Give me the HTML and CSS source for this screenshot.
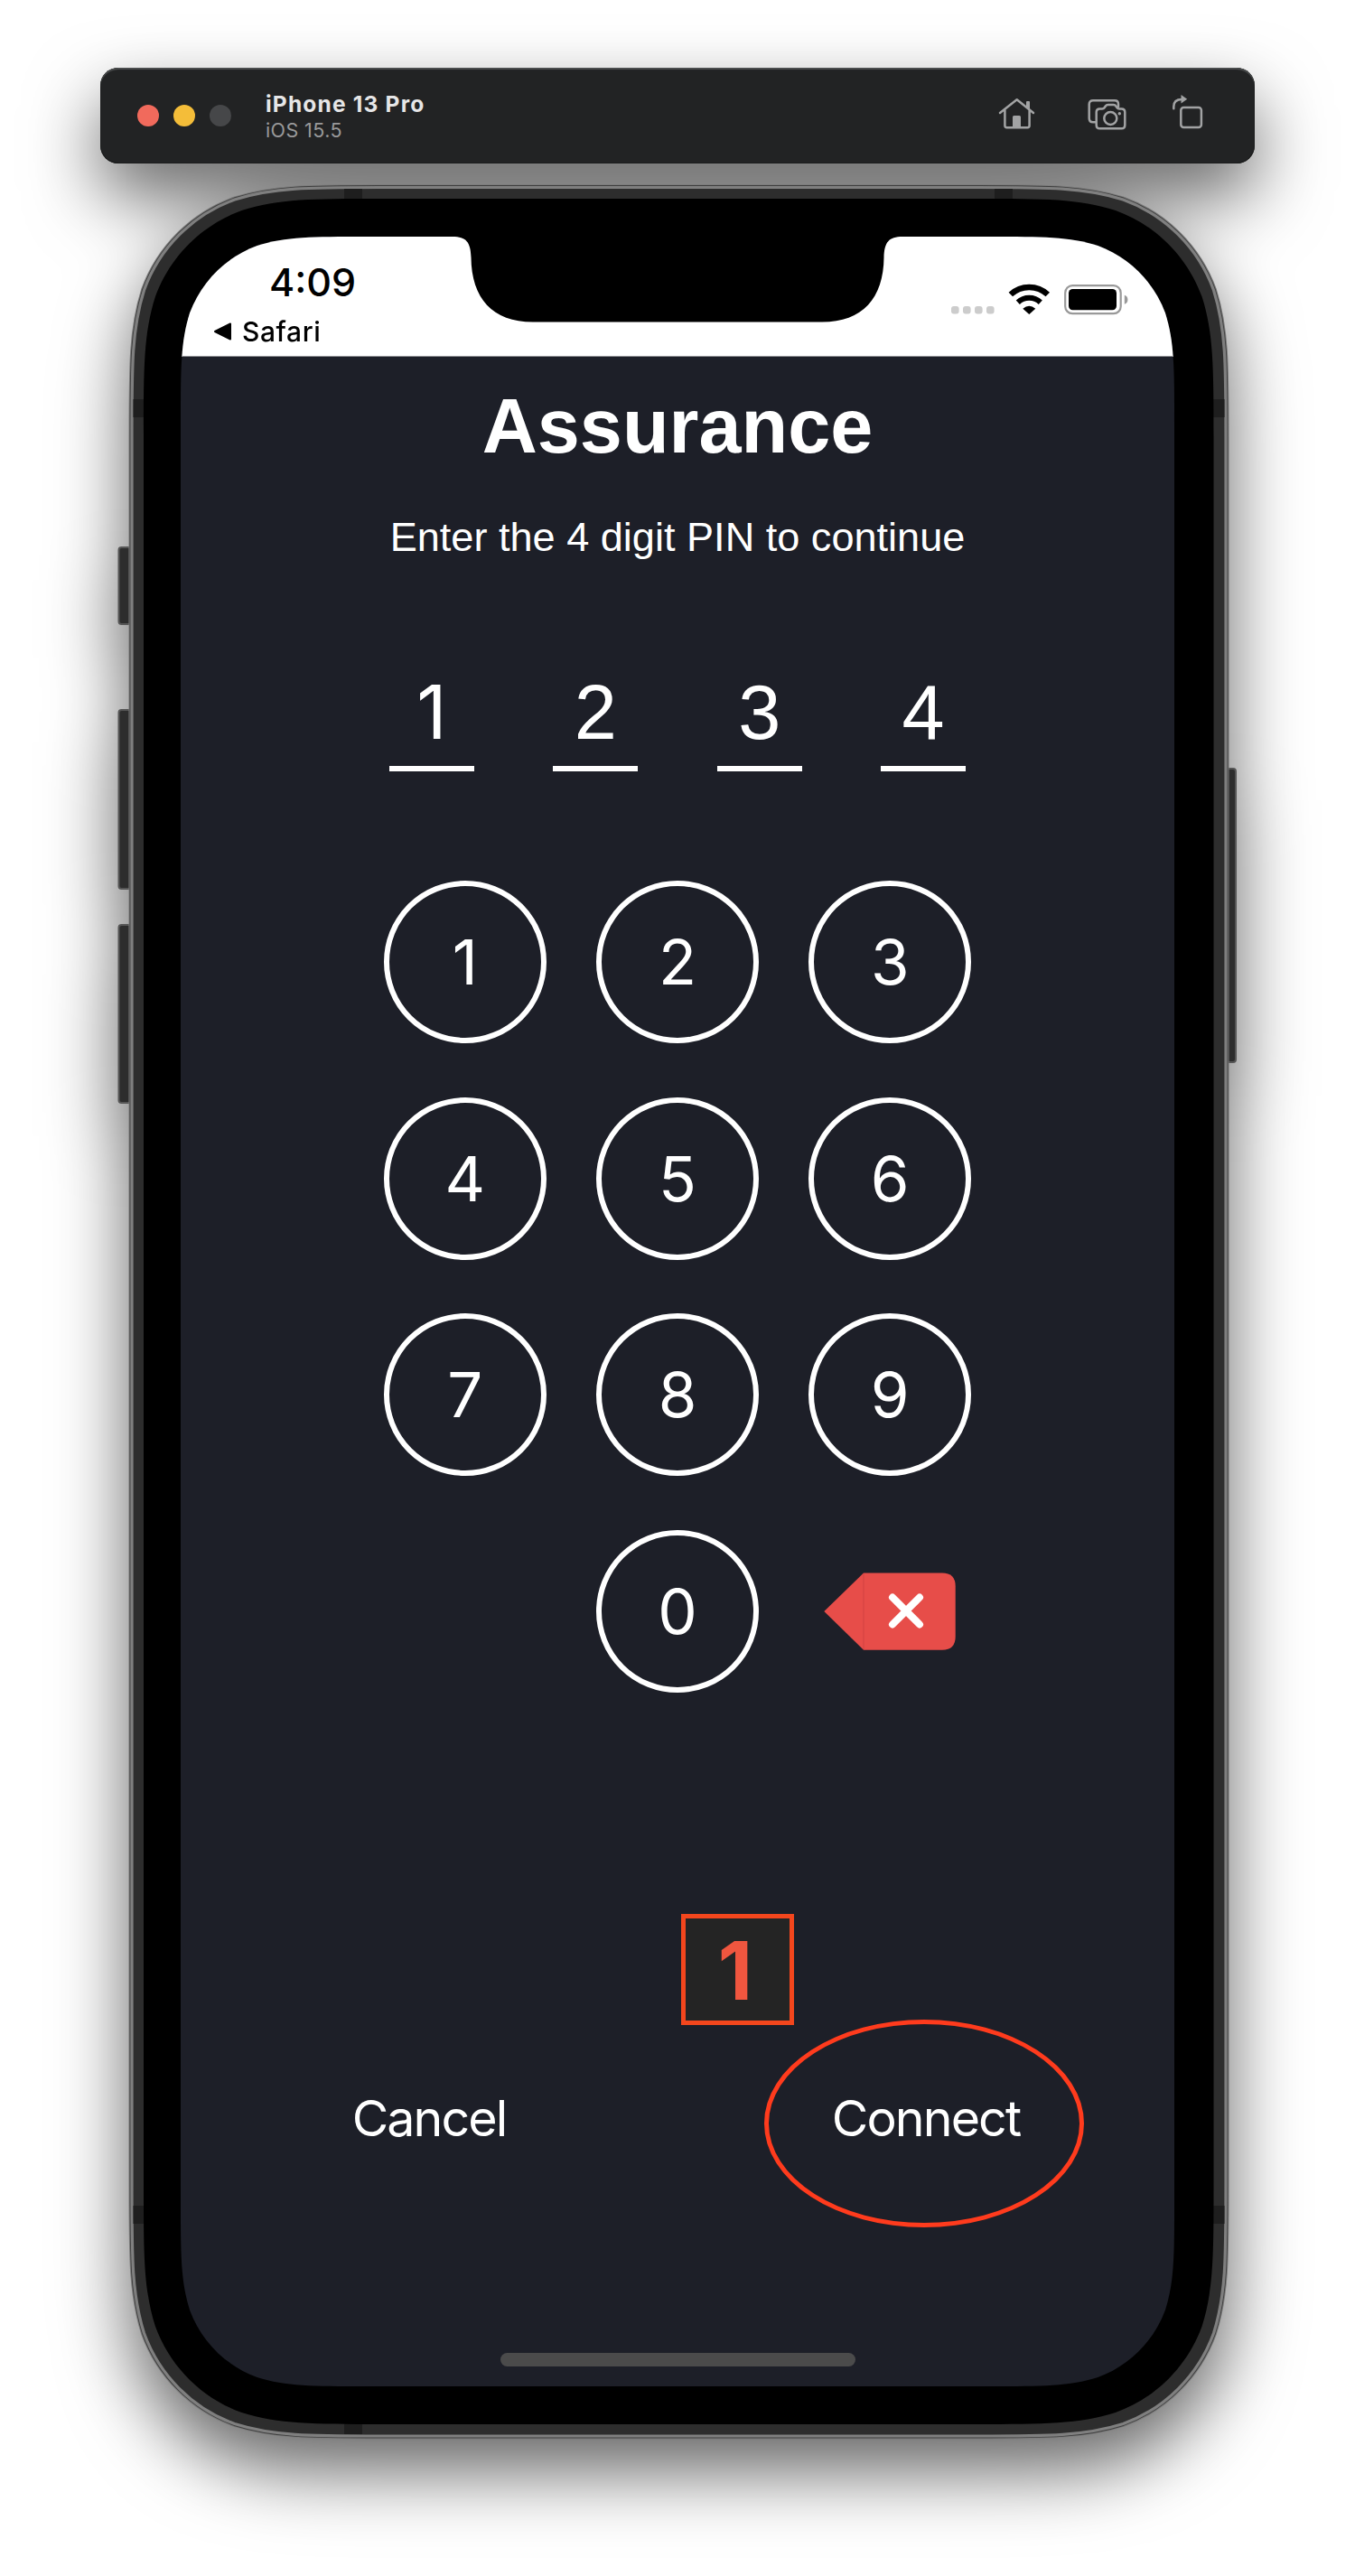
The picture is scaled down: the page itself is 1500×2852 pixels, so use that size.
FILE: index.html
```html
<!DOCTYPE html>
<html lang="en">
<head>
<meta charset="utf-8">
<title>iPhone 13 Pro – iOS 15.5</title>
<link rel="stylesheet" href="styles.css">
</head>
<body>
<main class="simulator">
  <header class="titlebar">
    <div class="lights"><i class="light red"></i><i class="light yellow"></i><i class="light off"></i></div>
    <div class="window-title">
      <div class="device-name">iPhone 13 Pro</div>
      <div class="os-name">iOS 15.5</div>
    </div>
    <nav class="tools">
      <svg class="tool home" viewBox="0 0 41 42" width="41" height="42">
        <path d="M2 21 20.7 6.3 39 21M7.4 18v17q0 2.2 2.2 2.2h22.8q2.2 0 2.2-2.2V18"/>
        <path class="solid" d="M16 25.5q0-1.5 1.500-1.500h6q1.500 0 1.500 1.500V38h-9zM31 9q0-1 1-1h2q1 0 1 1v9l-4-3.500z"/>
      </svg>
      <svg class="tool camera" viewBox="0 0 45 42" width="45" height="42">
        <path d="M9.500 31.200H7q-4.300 0-4.300-4.300V11.500q0-4.200 4.300-4.200h24q4 0 4 4v3"/>
        <path d="M14.500 16.500h2.500q1.800 0 2.800-1.500l1-1.500q1-1.400 2.800-1.400h6q1.800 0 2.800 1.400l1 1.500q1 1.500 2.800 1.500h2.300q3.800 0 3.800 3.800v14.200q0 3.800-3.800 3.800h-24q-3.800 0-3.800-3.800V20.300q0-3.800 3.800-3.800z"/>
        <circle cx="26.300" cy="27" r="7"/><circle class="solid" cx="36.300" cy="21.700" r="1.700"/>
      </svg>
      <svg class="tool rotate" viewBox="0 0 35 42" width="35" height="42">
        <rect x="10.300" y="15" width="22.600" height="22" rx="3"/>
        <path d="M2.300 16.300V14q0-8 9-8"/>
        <path class="solid" d="M10.500 1 17.200 5.700 10.500 10.500z"/>
      </svg>
    </nav>
  </header>

  <section class="device">
    <svg class="chassis" viewBox="111 190 1278 2530" width="1278" height="2530">
      <defs>
        <path id="frame" d="M421.200 207.500H1081.800c79.300 0 118.900 0 161.500 13.500c46.600 16.900 83.300 53.600 100.200 100.200c13.500 42.600 13.500 82.200 13.500 161.500V2421.800c0 79.300 0 118.900-13.500 161.500c-16.900 46.600-53.600 83.300-100.200 100.200c-42.600 13.500-82.200 13.500-161.500 13.500H421.200c-79.300 0-118.900 0-161.500-13.500c-46.600-16.900-83.300-53.600-100.200-100.200c-13.500-42.600-13.500-82.200-13.500-161.500V482.700c0-79.300 0-118.900 13.500-161.500c16.900-46.600 53.600-83.300 100.200-100.200c42.600-13.500 82.200-13.500 161.500-13.500z"/>
      </defs>
      <g class="side-buttons">
        <rect x="131.500" y="606" width="20" height="85" rx="3"/>
        <rect x="131.500" y="786" width="20" height="198" rx="3"/>
        <rect x="131.500" y="1024" width="20" height="197" rx="3"/>
        <rect x="1350" y="851" width="18" height="325" rx="3"/>
      </g>
      <use href="#frame" class="edge-outer"/>
      <use href="#frame" class="edge-line"/>
      <use href="#frame" class="edge-light"/>
      <g class="bands">
        <path d="M381 209h20v12h-20zM1101 209h20v12h-20zM381 2683h20v12h-20zM147.500 442h12v20h-12zM147.500 2442h12v20h-12zM1343 442h12.500v20h-12.500zM1343 2442h12.500v20h-12.500z"/>
      </g>
      <path class="bezel" d="M421.900 220H1080.600c75.700 0 113.500 0 154.300 12.900c44.500 16.200 79.500 51.200 95.700 95.700c12.900 40.800 12.900 78.600 12.900 154.300V2421.100c0 75.700 0 113.500-12.900 154.300c-16.200 44.500-51.200 79.500-95.700 95.700c-40.800 12.900-78.600 12.900-154.300 12.900H421.900c-75.700 0-113.500 0-154.300-12.900c-44.500-16.200-79.500-51.200-95.700-95.700c-12.900-40.800-12.900-78.600-12.900-154.300V482.900c0-75.700 0-113.500 12.900-154.300c16.200-44.500 51.200-79.500 95.700-95.700c40.800-12.900 78.600-12.900 154.300-12.900z"/>
    </svg>

    <div class="screen">
      <div class="statusbar">
        <div class="status-left">
          <div class="time">4:09</div>
          <div class="back"><svg viewBox="0 0 20 20" width="20" height="20"><path d="M19 1.500v17L2 10z" stroke="#000" stroke-width="2" stroke-linejoin="round"/></svg><span>Safari</span></div>
        </div>
        <div class="status-right">
          <svg class="signal" viewBox="0 0 50 10" width="50" height="10" fill="#ccc"><rect x="1" y="1" width="8.600" height="8.600" rx="3"/><rect x="14" y="1" width="8.600" height="8.600" rx="3"/><rect x="27" y="1" width="8.600" height="8.600" rx="3"/><rect x="40" y="1" width="8.600" height="8.600" rx="3"/></svg>
          <svg class="wifi" viewBox="0 0 50 38" width="50" height="38"><g fill="none" stroke="#000"><path stroke-width="6.500" d="M4.800 14a30 30 0 0 1 41 0"/><path stroke-width="6" d="M12.800 22.700a18.300 18.300 0 0 1 25 0"/></g><path d="M18.300 29.800Q25.300 23.500 32.300 29.800L25.300 36z"/></svg>
          <svg class="battery" viewBox="0 0 74 36" width="74" height="36"><rect x="2.200" y="2.200" width="61.500" height="31" rx="8" fill="none" stroke="#999" stroke-width="2.200"/><rect x="6" y="6" width="53" height="23.300" rx="4.500"/><path fill="#999" d="M67.800 12.800q3.600 1.200 3.600 5t-3.600 5z"/></svg>
        </div>
        <svg class="notch" viewBox="0 0 498 96" width="498" height="96"><path d="M0 0C15 0 20 6 20.500 23C21 68 44 94.500 89 94.500H409C454 94.500 477 68 477.500 23C478 6 483 0 498 0z"/></svg>
      </div>

      <h1 class="title">Assurance</h1>
      <p class="subtitle">Enter the 4 digit PIN to continue</p>
      <div class="pin"><span class="one">1</span><span>2</span><span>3</span><span>4</span></div>

      <div class="keypad">
        <button class="key">1</button><button class="key">2</button><button class="key">3</button>
        <button class="key">4</button><button class="key">5</button><button class="key">6</button>
        <button class="key">7</button><button class="key">8</button><button class="key">9</button>
        <button class="key zero">0</button>
        <button class="erase" aria-label="Delete">
          <svg viewBox="0 0 148 86" width="148" height="86"><path fill="#e74d49" d="M.300 43 44 .500H131q14.700 0 14.700 14.700V71q0 14.700-14.700 14.700H44z"/><path d="M44 1v84" stroke="#d94644" stroke-width="1.500"/><path d="m76 27.500 30 30m0-30-30 30" stroke="#fff" stroke-width="8" stroke-linecap="round"/></svg>
        </button>
      </div>

      <div class="actions"><button class="action cancel">Cancel</button><button class="action connect">Connect</button></div>
      <div class="home-indicator"></div>

      <div class="callout">1</div>
      <div class="highlight"></div>
    </div>
  </section>
</main>
</body>
</html>
```
FILE: styles.css
```css
* { box-sizing: border-box; }

body {
  margin: 0;
  background: #fff;
  font-family: Inter, "Liberation Sans", sans-serif;
}

button {
  padding: 0;
  border: 0;
  background: none;
  color: inherit;
  font: inherit;
}

svg { display: block; }

.simulator {
  width: 1500px;
  height: 2852px;
  padding: 75px 111px 0;
  overflow: hidden;
  filter: drop-shadow(0 36px 40px rgba(0, 0, 0, .6));
}

/* Window title bar */
.titlebar {
  display: flex;
  height: 106px;
  padding: 0 57px 0 41px;
  border-radius: 20px;
  background: #222324;
  box-shadow: inset 0 2px 1px #4c4e4f, inset 0 0 0 1px #1b1c1c;
}

.lights {
  display: flex;
  gap: 16px;
  padding-top: 41px;
}

.light {
  width: 24px;
  height: 24px;
  border-radius: 50%;
}

.red { background: #f16a5c; }
.yellow { background: #f4bd39; }
.off { background: #464749; }

.window-title { margin: 25px 0 0 38px; }

.device-name {
  color: #e6e6e7;
  font-size: 24.500px;
  font-weight: 700;
  line-height: 30px;
  letter-spacing: 1.200px;
  white-space: nowrap;
}

.os-name {
  margin-top: 1px;
  color: #99999a;
  font-size: 21.500px;
  line-height: 26px;
  letter-spacing: .400px;
}

.tools {
  display: flex;
  margin: 29px 0 0 auto;
}

.tool {
  fill: none;
  stroke: #a2a3a4;
  stroke-width: 2.500;
  stroke-linecap: round;
  stroke-linejoin: round;
}

.tool .solid {
  fill: #a2a3a4;
  stroke: none;
}

.camera { margin-left: 57px; }
.rotate { margin-left: 49px; }

/* Phone body */
.device {
  position: relative;
  padding: 81px 89px 0;
}

.chassis {
  position: absolute;
  left: 0;
  top: 9px;
}

.side-buttons {
  fill: #2d2d2d;
  stroke: #565656;
  stroke-width: 2;
}

.edge-outer { fill: none; stroke: #7b7b7b; stroke-width: 7; }
.edge-line { fill: none; stroke: #3f3f3f; stroke-width: 5; }
.edge-light { fill: #2d2d2d; stroke: #7f7f7f; stroke-width: 3.200; }
.bands { fill: #1e1e1e; }

.screen {
  position: relative;
  width: 1100px;
  height: 2380px;
  background: #1d1f28;
  color: #fff;
  clip-path: path("M204.8 0H895.2c58.9 0 88.4 0 120.2 10c34.6 12.700 61.900 40 74.600 74.600c10 31.800 10 61.300 10 120.200V2175.200c0 58.900 0 88.400-10 120.200c-12.700 34.600-40 61.900-74.600 74.600c-31.800 10-61.300 10-120.200 10H204.800c-58.900 0-88.400 0-120.200-10c-34.600-12.700-61.900-40-74.600-74.600c-10-31.800-10-61.300-10-120.200V204.800c0-58.900 0-88.400 10-120.200c12.700-34.600 40-61.900 74.600-74.600c31.800-10 61.300-10 120.200-10z");
}

/* Status bar */
.statusbar {
  position: relative;
  display: flex;
  justify-content: space-between;
  height: 133px;
  padding: 24px 49px 0 36px;
  border-bottom: 1px solid #8f9094;
  background: #fff;
  color: #000;
}

.time {
  padding: 1px 0 0 62px;
  font-size: 43px;
  font-weight: 550;
  line-height: 50px;
}

.back {
  display: flex;
  align-items: center;
  gap: 12px;
  height: 30px;
  margin-top: 15px;
  font-size: 30px;
  font-weight: 500;
  line-height: 30px;
  letter-spacing: .600px;
}

.status-right {
  display: flex;
  padding-top: 26px;
}

.signal { margin: 26px 12px 0 0; }
.battery { margin: 2px 0 0 13px; }

.notch {
  position: absolute;
  left: 301px;
  top: 0;
}

/* PIN entry */
.title {
  margin: 27px 0 0;
  font: 700 84.600px/100px "Liberation Sans", Arial, sans-serif;
  text-align: center;
}

.subtitle {
  margin: 43px 0 0;
  font: 45.100px/60px "Liberation Sans", Arial, sans-serif;
  text-align: center;
}

.pin {
  display: flex;
  justify-content: space-between;
  width: 638px;
  margin: 119px auto 0;
}

.pin span {
  width: 94px;
  padding-bottom: 14px;
  border-bottom: 6px solid #fff;
  font: 84.600px/90px "Liberation Sans", Arial, sans-serif;
  text-align: center;
}

.pin .one {
  font-family: Inter, sans-serif;
  font-size: 82px;
}

.keypad {
  display: grid;
  grid-template-columns: repeat(3, 180px);
  grid-auto-rows: 180px;
  gap: 59.700px 55.200px;
  justify-content: center;
  margin-top: 121px;
}

.key {
  border: 6px solid #fff;
  border-radius: 50%;
  font-size: 69px;
  line-height: 168px;
}

.zero { grid-column: 2; }

.erase svg { margin-left: 17px; }

.actions {
  display: grid;
  grid-template-columns: 1fr 1fr;
  margin-top: 436px;
}

.action {
  font-size: 55.500px;
  line-height: 70px;
  letter-spacing: -1.900px;
}

.home-indicator {
  width: 393px;
  height: 15px;
  margin: 225px auto 0;
  border-radius: 8px;
  background: #4b4b4b;
}

/* Tutorial annotations drawn over the screen */
.callout {
  position: absolute;
  left: 554px;
  top: 1857px;
  width: 125px;
  height: 123px;
  padding-right: 5px;
  border: 5px solid #f3461d;
  background: #242424;
  color: #f0563f;
  font: 700 89px/115px Inter, sans-serif;
  text-align: center;
}

.highlight {
  position: absolute;
  left: 646px;
  top: 1974px;
  width: 354px;
  height: 230px;
  border: 5px solid #ff3b1d;
  border-radius: 50%;
}
```
